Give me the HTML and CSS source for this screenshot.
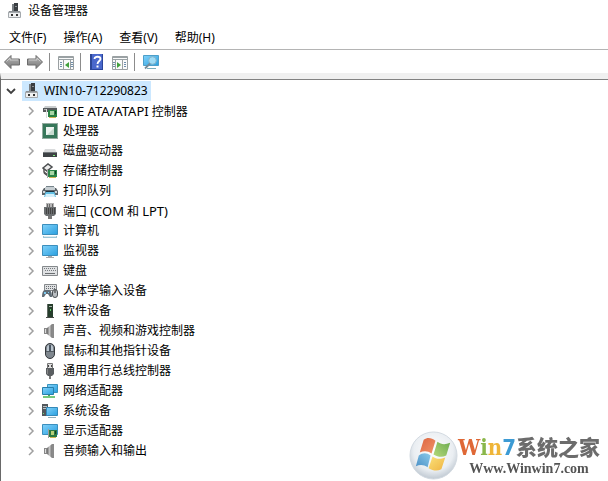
FILE: index.html
```
<!DOCTYPE html>
<html lang="zh-CN">
<head>
    <meta charset="UTF-8">
    <meta name="viewport" content="width=device-width, initial-scale=1.0">
    <title>设备管理器</title>
    <link rel="stylesheet" href="styles.css">
</head>
<body>
    <!-- icons -->
    <svg class="sprite" aria-hidden="true">
        <defs>
            <linearGradient id="screen" x1="0" y1="0" x2="1" y2="1">
                <stop offset="0" stop-color="#82d2fa"/>
                <stop offset="1" stop-color="#299fdf"/>
            </linearGradient>
            <linearGradient id="metal" x1="0" y1="0" x2="1" y2="0">
                <stop offset="0" stop-color="#666"/>
                <stop offset=".5" stop-color="#c4c4c4"/>
                <stop offset="1" stop-color="#777"/>
            </linearGradient>
            <linearGradient id="arrow" x1="0" y1="0" x2="0" y2="1">
                <stop offset="0" stop-color="#b8b8b8"/>
                <stop offset="1" stop-color="#777"/>
            </linearGradient>
        </defs>
        <symbol id="i-device" viewBox="0 0 16 16">
            <path d="M6 1h3v8H6z" fill="#7b8084"/>
            <path d="M8 0h4v9H8z" fill="#3a3e42"/>
            <path d="M9 3h2v1H9z" fill="#8b9094"/>
            <path d="M3 8h11l1 2H2z" fill="#8d9195"/>
            <path d="M2.500 9.500h12v5h-12z" fill="#f0f1f2" stroke="#a4a9ad"/>
            <path d="M5 11h2v2H5zM10 11h2v2h-2z" fill="#333"/>
        </symbol>
        <symbol id="i-back" viewBox="0 0 16 16">
            <path d="M.5 8 7 1.500v3.500h8.500v6H7v3.500z" fill="url(#arrow)" stroke="#6c6c6c"/>
            <path d="M2.500 7.500 6 4v2h8" fill="none" stroke="#ccc"/>
        </symbol>
        <symbol id="i-forward" viewBox="0 0 16 16">
            <path d="M15.500 8 9 1.500v3.500H.5v6H9v3.500z" fill="url(#arrow)" stroke="#6c6c6c"/>
            <path d="M2 6h8V4l3.500 3.500" fill="none" stroke="#ccc"/>
        </symbol>
        <symbol id="i-pane-left" viewBox="0 0 16 16">
            <path d="M.5 2.500h15v13H.5z" fill="#fafafa" stroke="#9aa0a2"/>
            <path d="M1 3h14v1H1zM1 5h14v1H1z" fill="#9aa2a5"/>
            <path d="M5.500 6v9M12.500 6v9" stroke="#9aa0a2"/>
            <path d="M2 8.500h2M2 10.500h2M2 12.500h2M13 8.500h2M13 10.500h2M13 12.500h2" stroke="#6e8daa"/>
            <path d="M11 8v6l-4-3z" fill="#41a03c"/>
        </symbol>
        <symbol id="i-pane-right" viewBox="0 0 16 16">
            <path d="M.5 2.500h15v13H.5z" fill="#fafafa" stroke="#9aa0a2"/>
            <path d="M1 3h14v1H1zM1 5h14v1H1z" fill="#9aa2a5"/>
            <path d="M3.500 6v9M10.500 6v9" stroke="#9aa0a2"/>
            <path d="M1 8.500h2M1 10.500h2M1 12.500h2M12 8.500h2M12 10.500h2M12 12.500h2" stroke="#6e8daa"/>
            <path d="M5 8v6l4-3z" fill="#41a03c"/>
        </symbol>
        <symbol id="i-help" viewBox="0 0 16 16">
            <path d="M1 0h13v16H1z" fill="#4a68cc"/>
            <path d="M1 0h2v16H1z" fill="#2c4696"/>
            <path d="M13 0h1v16h-1zM1 15h13v1H1z" fill="#2a459c"/>
            <path d="M5.500 5c0-3 6-3 6 0 0 2-3 2-3 5" fill="none" stroke="#fff" stroke-width="1.800"/>
            <path d="M7.500 11.500h2v2h-2z" fill="#fff"/>
        </symbol>
        <symbol id="i-scan" viewBox="0 0 16 16">
            <path d="M.5 1.500h15v10H.5z" fill="url(#screen)" stroke="#4d9fc9"/>
            <path d="M4 14h9v1H4z" fill="#78aebd"/>
            <circle cx="9.500" cy="6.500" r="3.800" fill="#9fdcf6" stroke="#86b4c9"/>
            <path d="m7 9.500-5 5" stroke="#758b98" stroke-width="1.800"/>
        </symbol>
        <symbol id="i-ide" viewBox="0 0 16 16">
            <path d="M3 3h11l1 3H1z" fill="#c9cccd"/>
            <path d="M1 5h14v4H1z" fill="#55595b"/>
            <path d="M2 6h3v1H2z" fill="#aaa"/>
            <path d="M6 7h9v7H6z" fill="#2a8245"/>
            <path d="M4 6h1v9H4z" fill="#d8dcda"/>
            <path d="M8 8h4v4H8z" fill="#a8d7a6"/>
            <path d="M13 8h1v3h-1z" fill="#123f23"/>
            <path d="M7 14h7v1H7z" fill="#ccb553"/>
        </symbol>
        <symbol id="i-cpu" viewBox="0 0 16 16">
            <path d="M1 1h14v14H1z" fill="#37775a"/>
            <path d="M.5.5h15v15H.5z" fill="none" stroke="#27563e" stroke-dasharray="1 1"/>
            <path d="M4 4h8v8H4z" fill="#edf4f0"/>
            <path d="m5 12 7-7v7z" fill="#c9dcd1"/>
        </symbol>
        <symbol id="i-disk" viewBox="0 0 16 16">
            <path d="M3 6h10l2 4H1z" fill="#d9dbdc"/>
            <path d="M1 9h14v5H1z" fill="#3e4245"/>
            <path d="M1 9h14v1H1z" fill="#75797c"/>
            <path d="M11 12h2v1h-2z" fill="#7ff07c"/>
        </symbol>
        <symbol id="i-storage" viewBox="0 0 16 16">
            <path d="m1 5 5-4 4 3-5 4zM2 10l4 3" fill="#eee" stroke="#4c4f51" stroke-width="1.500"/>
            <path d="M2 6v3l4 3" fill="none" stroke="#555" stroke-width="1.500"/>
            <path d="M6 7h9v7H6z" fill="#2b8549"/>
            <path d="M5 6h1v9H5z" fill="#aaa"/>
            <path d="M8 8h4v4H8z" fill="#a8d7a6"/>
            <path d="M13 8h1v3h-1z" fill="#123f23"/>
            <path d="M7 14h7v1H7z" fill="#ccb553"/>
        </symbol>
        <symbol id="i-printer" viewBox="0 0 16 16">
            <path d="M4 3h8v3H4z" fill="#75838a"/>
            <path d="M2 5h12l2 3v4H0V8z" fill="#5c6368"/>
            <path d="M3 4h10v3H3z" fill="#c6ced2"/>
            <path d="M1 8h2v2H1zM13 8h2v2h-2z" fill="#d1d6d8"/>
            <path d="M4 8h8l2 6H2z" fill="#64c1e5"/>
            <path d="M4 8h8v1H4z" fill="#1d3440"/>
            <path d="M4 11h8l1 3H3z" fill="#d5f0f9"/>
        </symbol>
        <symbol id="i-port" viewBox="0 0 16 16">
            <path d="M4 0h8v5H4z" fill="#b5b5b5"/>
            <path d="M5 1h1v3H5zM7 1h1v3H7zM10 1h1v3h-1z" fill="#666"/>
            <path d="M2 4h12v7l-2 2H4l-2-2z" fill="#6b6f71"/>
            <path d="M4.500 5v6M6.500 5v6M8.500 5v6M10.500 5v6M12.500 5v6" stroke="#444"/>
            <path d="M6 13h4v3H6z" fill="#777"/>
        </symbol>
        <symbol id="i-computer" viewBox="0 0 16 16">
            <path d="M.5 1.500h15v10H.5z" fill="url(#screen)" stroke="#3c8fbd"/>
            <path d="M1 13h14v2H1z" fill="#9fc6d6"/>
            <path d="M2 13h12v1H2z" fill="#dcebf0"/>
        </symbol>
        <symbol id="i-monitor" viewBox="0 0 16 16">
            <path d="M.5 2.500h15v10H.5z" fill="url(#screen)" stroke="#3c8fbd"/>
            <path d="M6 13h4v1H6zM4 14h8v1H4z" fill="#aaa"/>
        </symbol>
        <symbol id="i-keyboard" viewBox="0 0 16 16">
            <path d="M.5 3.500h15v9H.5z" fill="#dfe1e3" stroke="#85898c"/>
            <path d="M2 5.500h12M3 7.500h11" stroke="#777b7f" stroke-dasharray="1 1"/>
            <path d="M3 10.500h10" stroke="#6a6e71"/>
        </symbol>
        <symbol id="i-hid" viewBox="0 0 16 16">
            <path d="M2.500 1.500h12v6h-12z" fill="#dfe1e3" stroke="#85898c"/>
            <path d="M4 3.500h10M4 5.500h10" stroke="#686c70" stroke-dasharray="1 1"/>
            <path d="M0 14c0-4 1-7 3-7h4c2 0 3 3 3 7H8l-2-3H4l-2 3z" fill="#5f6c76"/>
            <path d="M2 9h2v2H2zM6 9h1v1H6z" fill="#7dc8ed"/>
            <rect x="10.500" y="6.500" width="5" height="8" rx="2.500" fill="#b8bdc1" stroke="#4b5053"/>
            <path d="M13 7v3" stroke="#333"/>
        </symbol>
        <symbol id="i-software" viewBox="0 0 16 16">
            <path d="M5 1h6v14H5z" fill="#263e2c"/>
            <path d="M5 1h1v14H5z" fill="#626b65"/>
            <path d="M7 3h3v1H7z" fill="#a6b4aa"/>
            <path d="M8 6h1v2H8z" fill="#61cf68"/>
            <path d="M4 14h8v1H4z" fill="#454845"/>
        </symbol>
        <symbol id="i-speaker" viewBox="0 0 16 16">
            <path d="M2 5h4v6H2z" fill="#888"/>
            <path d="m5 5 5-4v14l-5-4z" fill="url(#metal)"/>
            <path d="M10 1h2v14h-2z" fill="#8a8a8a"/>
            <path d="M3 6h1v4H3z" fill="#ddd"/>
        </symbol>
        <symbol id="i-mouse" viewBox="0 0 16 16">
            <rect x="3.500" y=".5" width="9" height="15" rx="4.500" fill="#7f878e" stroke="#34383c"/>
            <path d="M5 4c1-3 5-3 6 0v4H5z" fill="#b9c4ce"/>
            <path d="M8 2v6" stroke="#24313d" stroke-width="1.500"/>
            <path d="M4 8.500h8" stroke="#525b62"/>
        </symbol>
        <symbol id="i-usb" viewBox="0 0 16 16">
            <path d="M5.500.5h5v5h-5z" fill="#ddd" stroke="#777"/>
            <path d="M6 2h1v2H6zM9 2h1v2H9z" fill="#444"/>
            <path d="M4 5h8v6l-2 2H6l-2-2z" fill="#5a5e61"/>
            <path d="M5 6h1v5H5z" fill="#888"/>
            <path d="M7 13h2v3H7z" fill="#777"/>
        </symbol>
        <symbol id="i-network" viewBox="0 0 16 16">
            <path d="M5.500 1.500h10v8h-10z" fill="url(#screen)" stroke="#3993bd"/>
            <path d="M.5 4.500h11v7H.5z" fill="url(#screen)" stroke="#287fab"/>
            <path d="M6 12h2v2H6z" fill="#4fa65b"/>
            <path d="M1 13h12v2H1z" fill="#75c87e"/>
        </symbol>
        <symbol id="i-system" viewBox="0 0 16 16">
            <path d="M0 1h6v12H0z" fill="#52585c"/>
            <path d="M1 3h4v1H1zM1 5h4v1H1z" fill="#b8c1c5"/>
            <path d="M1 10h1v1H1z" fill="#71df7c"/>
            <path d="M4.500 4.500h11v8h-11z" fill="url(#screen)" stroke="#3489b8"/>
            <path d="M6 14h8v1H6z" fill="#93aeb9"/>
        </symbol>
        <symbol id="i-display" viewBox="0 0 16 16">
            <path d="M.5 1.500h15v10H.5z" fill="url(#screen)" stroke="#3c8fbd"/>
            <path d="M7 7h8v7H7z" fill="#2b7944"/>
            <path d="M6 6h1v9H6z" fill="#9ca19d"/>
            <path d="M9 8h3v4H9z" fill="#b7cf78"/>
            <path d="M13 8h1v3h-1z" fill="#123f23"/>
            <path d="M8 14h6v1H8z" fill="#ccb553"/>
        </symbol>
        <symbol id="i-chevron" viewBox="0 0 10 10">
            <path d="m3 1 4 4-4 4" fill="none" stroke="currentColor" stroke-width="1.500"/>
        </symbol>
        <symbol id="i-chevron-open" viewBox="0 0 10 10">
            <path d="m1 3 4 4 4-4" fill="none" stroke="currentColor" stroke-width="1.800"/>
        </symbol>
    </svg>

    <header class="title-bar">
        <svg class="icon"><use href="#i-device"/></svg>
        <h1 class="title">设备管理器</h1>
    </header>

    <nav class="menu-bar">
        <button class="menu">文件(F)</button>
        <button class="menu">操作(A)</button>
        <button class="menu">查看(V)</button>
        <button class="menu">帮助(H)</button>
    </nav>

    <div class="toolbar">
        <button class="tool" aria-label="后退"><svg class="icon"><use href="#i-back"/></svg></button>
        <button class="tool" aria-label="前进"><svg class="icon"><use href="#i-forward"/></svg></button>
        <span class="separator"></span>
        <button class="tool" aria-label="控制台树"><svg class="icon"><use href="#i-pane-left"/></svg></button>
        <span class="separator"></span>
        <button class="tool" aria-label="帮助"><svg class="icon"><use href="#i-help"/></svg></button>
        <button class="tool" aria-label="操作窗格"><svg class="icon"><use href="#i-pane-right"/></svg></button>
        <span class="separator"></span>
        <button class="tool" aria-label="扫描"><svg class="icon"><use href="#i-scan"/></svg></button>
    </div>

    <main class="content">
        <div class="row root">
            <button class="expander" aria-label="折叠"><svg class="chevron"><use href="#i-chevron-open"/></svg></button>
            <span class="selected"><svg class="icon"><use href="#i-device"/></svg>WIN10-712290823</span>
        </div>
        <ul class="tree"></ul>
    </main>

    <aside class="brand">
        <svg class="brand-logo" viewBox="0 0 50 50" aria-hidden="true">
            <defs>
                <radialGradient id="orb" cx=".5" cy=".4" r=".6">
                    <stop offset="0" stop-color="#fff"/>
                    <stop offset=".7" stop-color="#eaeef2"/>
                    <stop offset="1" stop-color="#c0c9d2"/>
                </radialGradient>
                <linearGradient id="red" x1="0" y1="0" x2="1" y2="1">
                    <stop offset="0" stop-color="#dd6540"/>
                    <stop offset="1" stop-color="#f0946b"/>
                </linearGradient>
                <linearGradient id="green" x1="1" y1="0" x2="0" y2="1">
                    <stop offset="0" stop-color="#6cab50"/>
                    <stop offset="1" stop-color="#b6d979"/>
                </linearGradient>
                <linearGradient id="blue" x1="0" y1="1" x2="1" y2="0">
                    <stop offset="0" stop-color="#4a8fc6"/>
                    <stop offset="1" stop-color="#8ccbea"/>
                </linearGradient>
                <linearGradient id="yellow" x1="1" y1="1" x2="0" y2="0">
                    <stop offset="0" stop-color="#efb442"/>
                    <stop offset="1" stop-color="#fbe17a"/>
                </linearGradient>
            </defs>
            <circle cx="25" cy="25" r="24" fill="url(#orb)" stroke="#d2d9e0"/>
            <path d="M15 9c4-3 8-2 12 1l-4 13c-4-3-8-3-12-1z" fill="url(#red)"/>
            <path d="M29 11c4 3 8 3 13 1l-4 13c-4 2-8 2-13-1z" fill="url(#green)"/>
            <path d="M10 25c4-3 8-3 12 0l-3 12c-4-3-8-3-12-1z" fill="url(#blue)"/>
            <path d="M24 26c4 3 8 3 13 1l-4 12c-4 2-8 2-13-1z" fill="url(#yellow)"/>
        </svg>
        <div class="brand-text">
            <div class="brand-name"><span class="w">W</span><span class="i">i</span><span class="n">n</span><span class="seven">7</span><span class="cn">系统之家</span></div>
            <div class="brand-url">Www.Winwin7.com</div>
        </div>
    </aside>

    <script src="script.js"></script>
</body>
</html>
```
FILE: styles.css
```
* {
    box-sizing: border-box;
}

body {
    margin: 0;
    min-height: 100vh;
    display: flex;
    flex-direction: column;
    background: #fff;
    color: #000;
    font: 12px/20px "Noto Sans", "Noto Sans CJK SC", sans-serif;
}

button {
    border: 0;
    padding: 0;
    background: none;
    color: inherit;
    font: inherit;
}

.sprite {
    position: absolute;
    width: 0;
    height: 0;
}

.icon {
    display: block;
    flex: none;
    width: 16px;
    height: 16px;
}

/* header */

.title-bar {
    display: flex;
    align-items: center;
    gap: 6px;
    height: 24px;
    padding: 0 6px 2px;
}

.title {
    margin: 0;
    font-size: 12px;
    font-weight: normal;
}

.menu-bar {
    display: flex;
    gap: 1px;
    height: 25px;
    padding: 4px 1px 1px;
}

.menu {
    padding: 0 8px;
}

.toolbar {
    display: flex;
    align-items: center;
    height: 24px;
    padding: 0 1px;
    border-top: 1px solid #b4b4b4;
}

.tool {
    padding: 0 3px;
    margin-right: 1px;
}

.separator {
    width: 1px;
    height: 18px;
    margin: 0 5px 0 2px;
    background: #8c8c8c;
}

/* device tree */

.content {
    flex: 1;
    border-top: 6px solid #f0f0f0;
    border-left: 1px solid #696969;
    box-shadow: inset 0 1px #828282;
    padding-top: 2px;
}

.row {
    display: flex;
    align-items: center;
    height: 20px;
}

.root {
    padding-left: 4px;
    gap: 5px;
}

.selected {
    display: flex;
    gap: 5px;
    align-items: center;
    height: 20px;
    padding: 0 3px 0 1px;
    background: #cce8ff;
}

.latin {
    font-size: 13px;
}

.expander {
    width: 12px;
    height: 20px;
    display: grid;
    place-items: center;
    color: #404040;
}

.chevron {
    width: 10px;
    height: 10px;
}

.tree {
    margin: 0;
    padding: 0 0 0 24px;
    list-style: none;
}

.tree .row {
    gap: 5px;
}

.tree .expander {
    color: #a0a0a0;
}

/* site mark in the corner */

.brand {
    position: fixed;
    right: 8px;
    bottom: 1px;
    display: flex;
    align-items: center;
}

.brand-logo {
    width: 49px;
    height: 49px;
}

.brand-text {
    display: flex;
    flex-direction: column;
    align-items: center;
}

.brand-name {
    display: flex;
    align-items: baseline;
    font: bold 22px/24px "DejaVu Serif Condensed", "DejaVu Serif", serif;
}

.w {
    color: #df6836;
}

.i {
    color: #8ab74b;
}

.n {
    color: #efb538;
}

.seven {
    color: #3d9bd4;
    font-family: "DejaVu Sans Condensed", "DejaVu Sans", sans-serif;
}

.cn {
    color: #6c6c6c;
    font-family: "Noto Sans CJK SC", sans-serif;
    font-size: 21px;
    font-weight: 900;
}

.brand-url {
    color: #555;
    font: bold 14px/18px "Liberation Serif", serif;
}
```
FILE: script.js
```
const devices = [
    ['ide', '<span class="latin">IDE ATA/ATAPI</span> 控制器'],
    ['cpu', '处理器'],
    ['disk', '磁盘驱动器'],
    ['storage', '存储控制器'],
    ['printer', '打印队列'],
    ['port', '端口 <span class="latin">(COM</span> 和 <span class="latin">LPT)</span>'],
    ['computer', '计算机'],
    ['monitor', '监视器'],
    ['keyboard', '键盘'],
    ['hid', '人体学输入设备'],
    ['software', '软件设备'],
    ['speaker', '声音、视频和游戏控制器'],
    ['mouse', '鼠标和其他指针设备'],
    ['usb', '通用串行总线控制器'],
    ['network', '网络适配器'],
    ['system', '系统设备'],
    ['display', '显示适配器'],
    ['speaker', '音频输入和输出']
];

const tree = document.querySelector('.tree');

devices.forEach(([icon, name]) => {
    tree.innerHTML += `
        <li class="row">
            <button class="expander" aria-label="展开"><svg class="chevron"><use href="#i-chevron"/></svg></button>
            <svg class="icon"><use href="#i-${icon}"/></svg>
            <span>${name}</span>
        </li>`;
});
```
